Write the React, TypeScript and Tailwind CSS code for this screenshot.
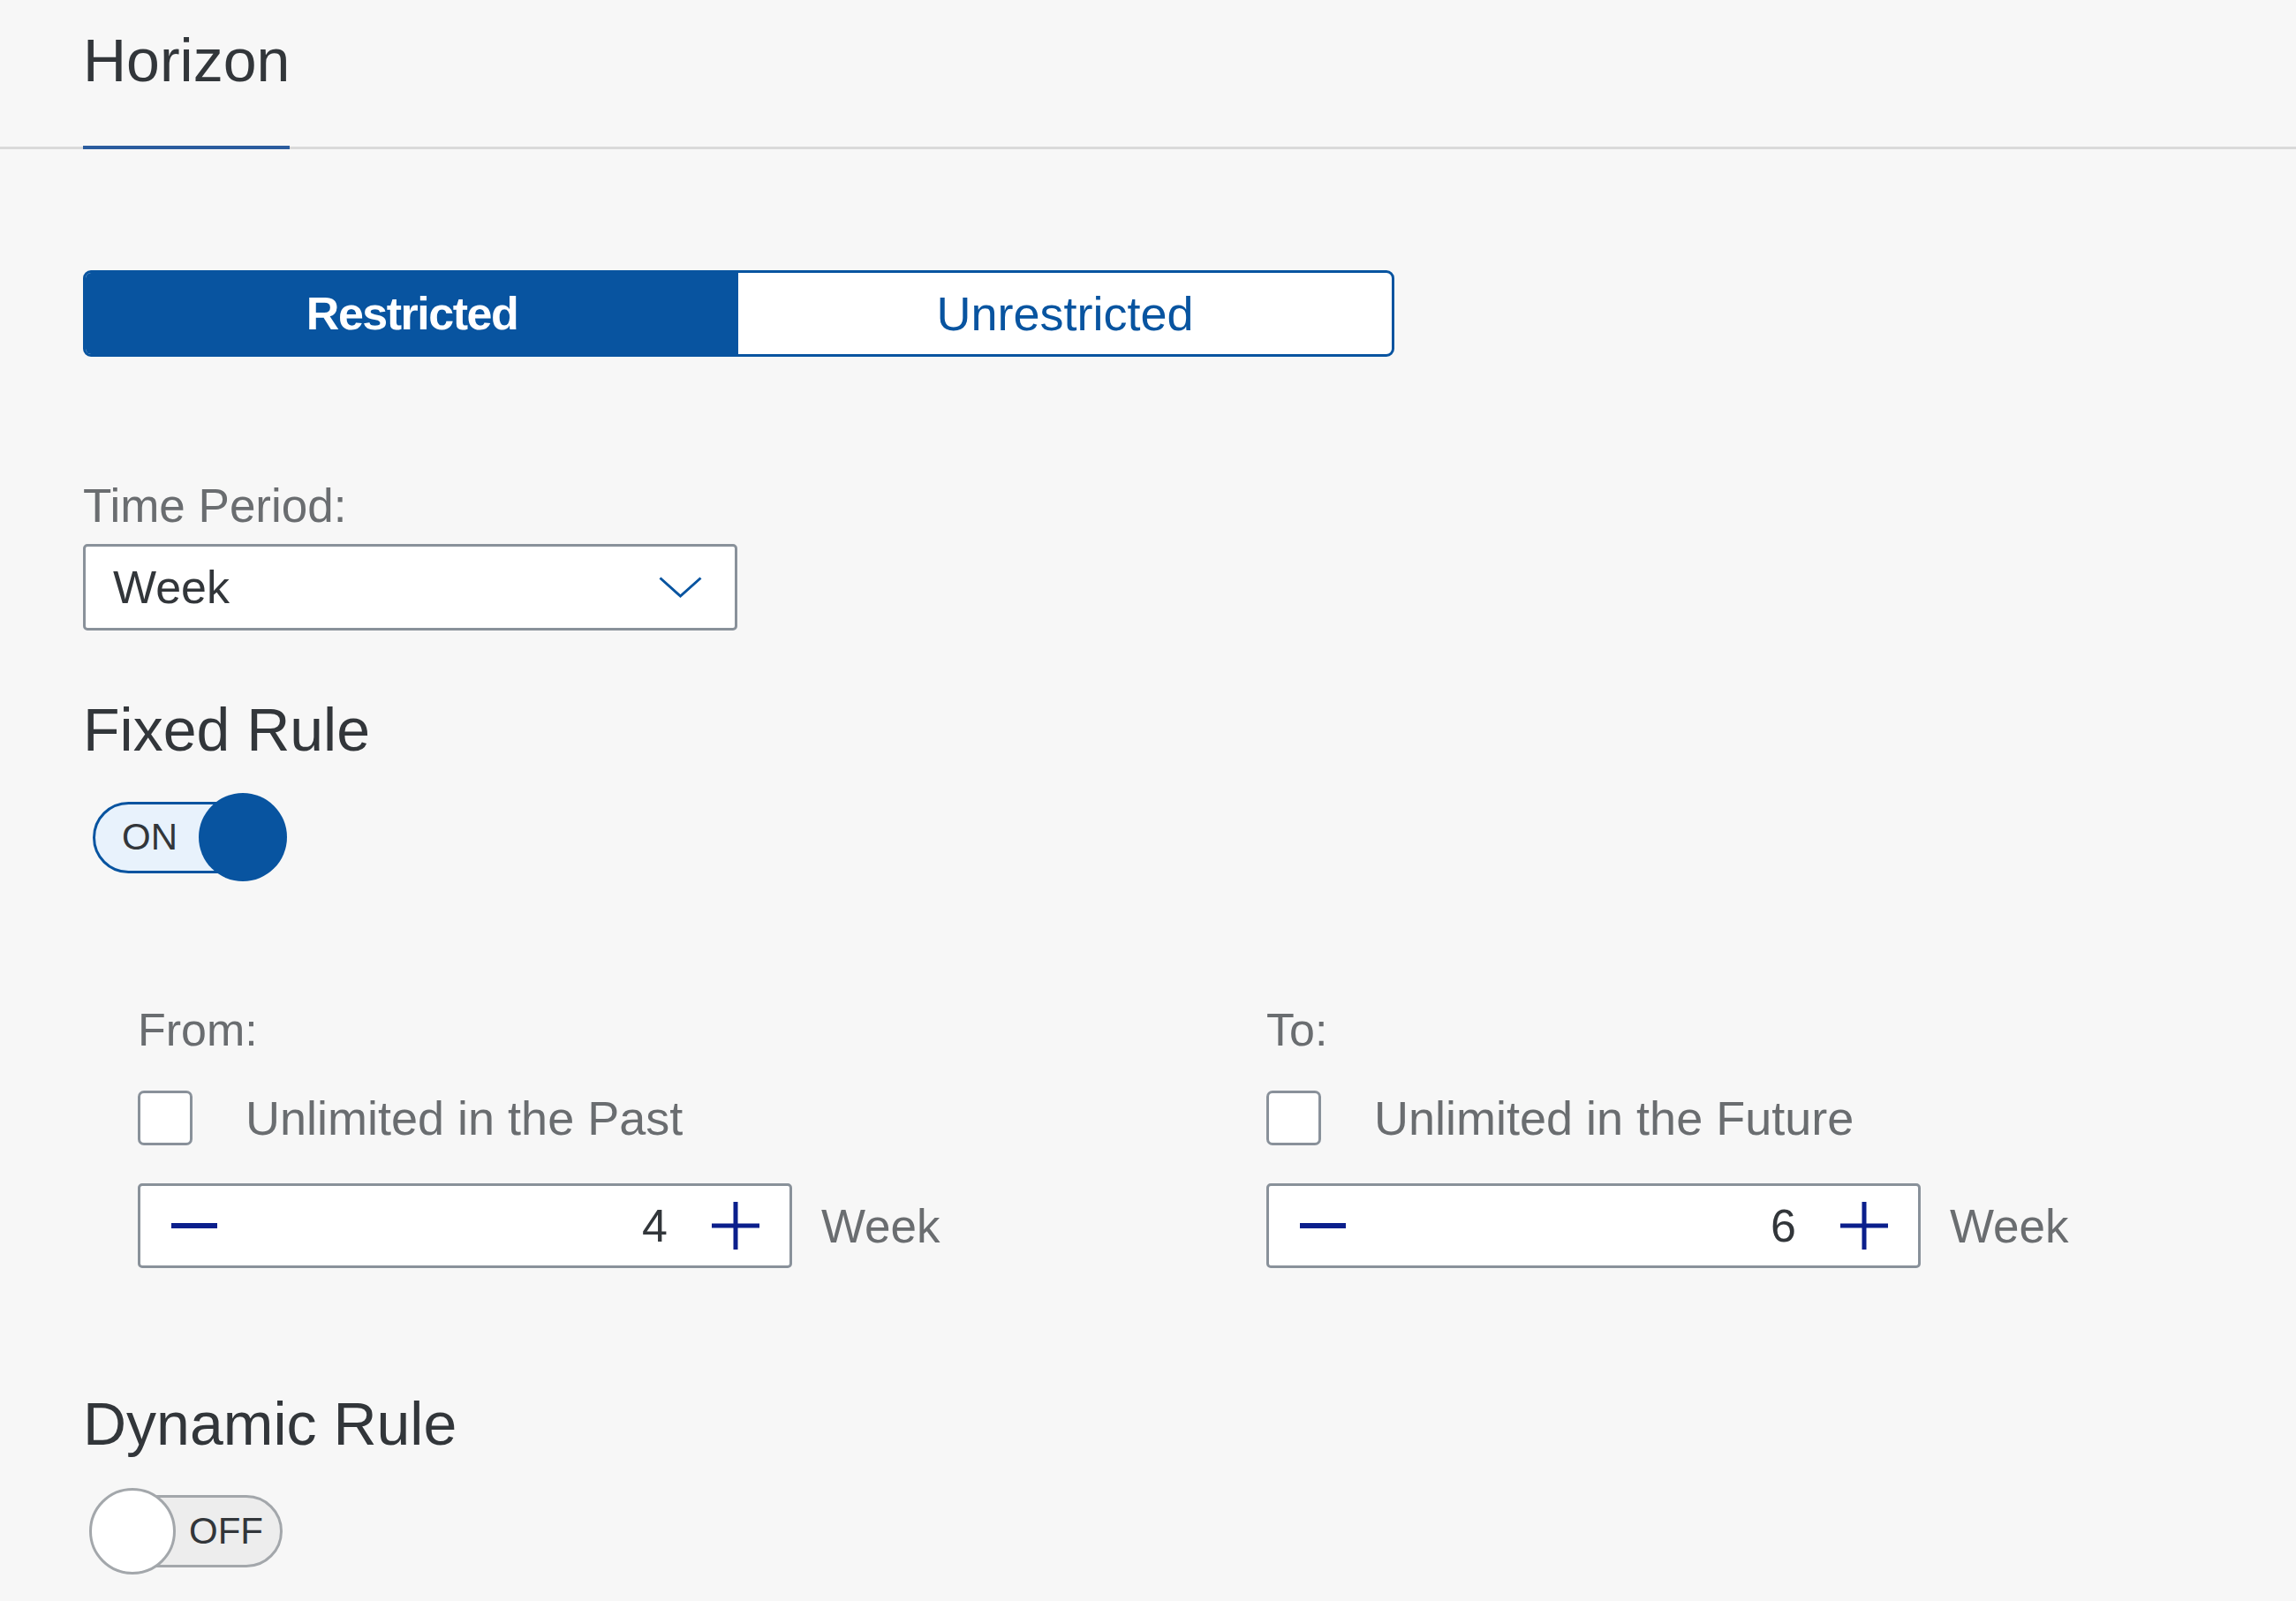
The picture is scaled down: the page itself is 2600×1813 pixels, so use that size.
import React from 'react';

const BLUE = '#0854a0';

function Toggle({ on }: { on: boolean }) {
  if (on) {
    return (
      <div className="relative ml-[11px] flex h-[100px] w-[220px] items-center">
        <div className="flex h-[81px] w-[215px] items-center rounded-full border-[3px] border-[#0854a0] bg-[#e8f2fc] pl-[30px]">
          <span className="text-[42px] leading-none text-[#32363a]">ON</span>
        </div>
        <div className="absolute right-0 top-0 h-[100px] w-[100px] rounded-full bg-[#0854a0]" />
      </div>
    );
  }
  return (
    <div className="relative ml-[7px] flex h-[98px] w-[219px] items-center justify-end">
      <div className="flex h-[82px] w-[212px] items-center rounded-full border-[3px] border-[#a3a7ab] bg-[#ededed] pl-[103px]">
        <span className="text-[42px] leading-none text-[#32363a]">OFF</span>
      </div>
      <div className="absolute left-0 top-0 h-[98px] w-[98px] rounded-full border-[3px] border-[#a3a7ab] bg-white" />
    </div>
  );
}

function Stepper({ value }: { value: number }) {
  return (
    <div className="mt-[44px] flex items-center gap-[33px]">
      <div className="flex h-[96px] w-[741px] items-center rounded-[5px] border-[3px] border-[#89919a] bg-white">
        <div className="flex w-[122px] justify-center">
          <div className="h-[6px] w-[52px] bg-[#0b1f8c]" />
        </div>
        <div className="flex-1 pr-[16px] text-right text-[52px] leading-none text-[#32363a]">{value}</div>
        <div className="flex w-[122px] justify-center">
          <svg width="56" height="56" viewBox="0 0 56 56">
            <path d="M28 1V55M1 28H55" stroke="#0b1f8c" strokeWidth="5" fill="none" />
          </svg>
        </div>
      </div>
      <span className="text-[53px] leading-none text-[#6a6d70]">Week</span>
    </div>
  );
}

function RangeColumn({ label, check, value }: { label: string; check: string; value: number }) {
  return (
    <div className="flex flex-col">
      <div className="h-[52px] text-[52px] leading-[52px] text-[#6a6d70]">{label}</div>
      <div className="mt-[43px] flex h-[61px] items-center gap-[60px]">
        <div className="h-[62px] w-[62px] rounded-[7px] border-[3px] border-[#89919a] bg-white" />
        <span className="text-[54px] leading-none text-[#6a6d70]">{check}</span>
      </div>
      <Stepper value={value} />
    </div>
  );
}

export default function App() {
  return (
    <div className="min-h-screen w-full bg-[#f7f7f7] font-['Liberation_Sans',Arial,sans-serif]">
      {/* tab header */}
      <div className="flex h-[169px] border-b-[3px] border-[#dadada] pl-[94px]">
        <div className="relative pt-[34px]">
          <div className="text-[68px] leading-[68px] text-[#32363a]">Horizon</div>
          <div className="absolute bottom-[-3px] left-0 right-0 h-[4px] bg-[#2b5c9e]" />
        </div>
      </div>

      <div className="flex flex-col pl-[94px]">
        {/* segmented button */}
        <div className="mt-[137px] flex h-[98px] w-[1485px] overflow-hidden rounded-[9px] border-[3px] border-[#0854a0] bg-white">
          <div className="flex w-[739px] items-center justify-center bg-[#0854a0] text-[52px] font-bold tracking-[-1.5px] text-white">
            Restricted
          </div>
          <div className="flex flex-1 items-center justify-center text-[54px] text-[#0854a0]">
            Unrestricted
          </div>
        </div>

        {/* time period */}
        <div className="mt-[143px] h-[52px] text-[53px] leading-[52px] text-[#6a6d70]">Time Period:</div>
        <div className="mt-[17px] flex h-[98px] w-[741px] items-center justify-between rounded-[5px] border-[3px] border-[#89919a] bg-white pl-[31px] pr-[37px]">
          <span className="text-[52px] leading-none text-[#32363a]">Week</span>
          <svg width="49" height="24" viewBox="0 0 49 24">
            <path d="M1.5 1.5L24.5 22L47.5 1.5" stroke={BLUE} strokeWidth="3" fill="none" />
          </svg>
        </div>

        {/* fixed rule */}
        <div className="mt-[78px] h-[68px] text-[68px] leading-[68px] text-[#32363a]">Fixed Rule</div>
        <div className="mt-[38px]">
          <Toggle on />
        </div>

        <div className="ml-[62px] mt-[142px] grid grid-cols-[1278px_1fr]">
          <RangeColumn label="From:" check="Unlimited in the Past" value={4} />
          <RangeColumn label="To:" check="Unlimited in the Future" value={6} />
        </div>

        {/* dynamic rule */}
        <div className="mt-[142px] h-[68px] text-[68px] leading-[68px] text-[#32363a]">Dynamic Rule</div>
        <div className="mt-[39px]">
          <Toggle on={false} />
        </div>
      </div>
    </div>
  );
}
